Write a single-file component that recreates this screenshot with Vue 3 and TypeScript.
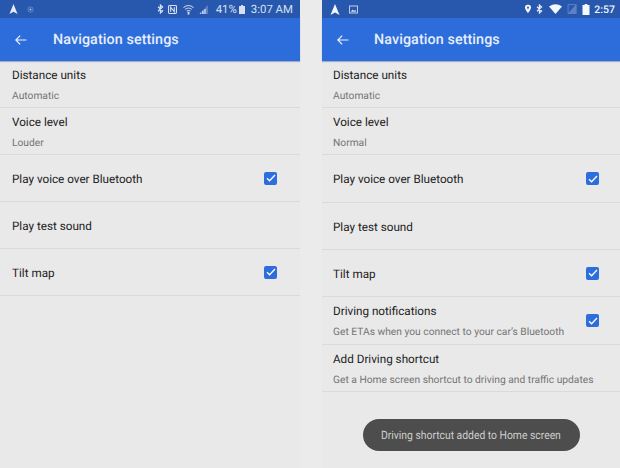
<script setup lang="ts">
interface Row {
  title: string;
  sub?: string;
  checked?: boolean;
  h: number;
}

const leftRows: Row[] = [
  { title: 'Distance units', sub: 'Automatic', h: 47 },
  { title: 'Voice level', sub: 'Louder', h: 47 },
  { title: 'Play voice over Bluetooth', checked: true, h: 47 },
  { title: 'Play test sound', h: 47 },
  { title: 'Tilt map', checked: true, h: 47 },
];

const rightRows: Row[] = [
  { title: 'Distance units', sub: 'Automatic', h: 47 },
  { title: 'Voice level', sub: 'Normal', h: 47 },
  { title: 'Play voice over Bluetooth', checked: true, h: 48 },
  { title: 'Play test sound', h: 47 },
  { title: 'Tilt map', checked: true, h: 47 },
  { title: 'Driving notifications', sub: 'Get ETAs when you connect to your car’s Bluetooth', checked: true, h: 48 },
  { title: 'Add Driving shortcut', sub: 'Get a Home screen shortcut to driving and traffic updates', h: 47 },
];
</script>

<template>
  <div class="shot">
    <!-- left phone -->
    <section class="phone left">
      <div class="status">
        <svg width="9" height="10" viewBox="0 0 10 11"><path d="M5 0 9.5 11 5 8.6.5 11z" fill="#e6ecf8" /></svg>
        <svg class="dot" width="7" height="7" viewBox="0 0 8 8"><circle cx="4" cy="4" r="3" fill="none" stroke="#6f8fcf" /><circle cx="4" cy="4" r="1.2" fill="#a9bde6" /></svg>
        <span class="grow"></span>
        <svg width="7" height="10" viewBox="0 0 7 10"><path d="M1 2.8 5.6 7 3.4 9V1L5.6 3 1 7.2" fill="none" stroke="#d7e0f3" stroke-width="1.2" /></svg>
        <svg class="ml4" width="9" height="9" viewBox="0 0 10 10"><rect x=".6" y=".6" width="8.8" height="8.8" rx="1" fill="none" stroke="#d7e0f3" stroke-width="1.2" /><path d="M3 7.5V2.5L7 7.5V2.5" fill="none" stroke="#d7e0f3" stroke-width="1.2" /></svg>
        <svg class="ml6" width="11" height="11" viewBox="0 0 12 11"><path d="M.5 3.5Q6-1 11.5 3.5M2.3 5.4Q6 2.4 9.7 5.4M4 7.2Q6 5.8 8 7.2" fill="none" stroke="#c3d0ec" stroke-width="1.1" /><path d="M5 8h2v3H5z" fill="#d7e0f3" /></svg>
        <svg class="ml5" width="10" height="9" viewBox="0 0 11 10"><path d="M0 10 10 0v10z" fill="#5f80c4" /><path d="M1 10h1V8.5H1zM3.5 10H5V6.5H3.5zM6 10h1.3V4.5H6z" fill="#d7e0f3" /></svg>
        <span class="st-text pct">41%</span>
        <svg class="ml2" width="6" height="9" viewBox="0 0 6 9"><path d="M2 0h2v1h2v8H0V1h2z" fill="#d7e0f3" /></svg>
        <span class="st-text time">3:07 AM</span>
      </div>
      <header class="bar">
        <svg width="12" height="10" viewBox="0 0 14 12"><path d="M13.5 6H1M6 .8.8 6 6 11.2" fill="none" stroke="#f2f5fc" stroke-width="1.4" /></svg>
        <span class="bar-title">Navigation settings</span>
      </header>
      <ul class="list">
        <li v-for="row in leftRows" :key="row.title" class="row" :style="{ height: row.h + 'px' }">
          <div class="texts">
            <div class="title">{{ row.title }}</div>
            <div v-if="row.sub" class="sub">{{ row.sub }}</div>
          </div>
          <span v-if="row.checked" class="box">
            <svg width="10" height="8" viewBox="0 0 10 8"><path d="M1 4.2 3.6 6.8 9 1" fill="none" stroke="#fff" stroke-width="1.3" /></svg>
          </span>
        </li>
      </ul>
    </section>

    <!-- right phone -->
    <section class="phone right">
      <div class="status">
        <svg width="10" height="11" viewBox="0 0 10 11"><path d="M5 0 9.5 11 5 8.6.5 11z" fill="#f4f7fc" /></svg>
        <svg class="dot" width="9" height="9" viewBox="0 0 10 9"><rect x=".6" y=".6" width="8.8" height="7.8" fill="none" stroke="#c3d0ec" stroke-width="1.1" /><path d="M2 7 4 4.5 5.5 6 7 5 8 7z" fill="#d7e0f3" /></svg>
        <span class="grow"></span>
        <svg width="6" height="10" viewBox="0 0 7 10"><path d="M3.5 0A3.3 3.3 0 0 1 7 3.3C7 5.5 3.5 10 3.5 10S0 5.5 0 3.3A3.3 3.3 0 0 1 3.5 0z" fill="#f4f7fc" /><circle cx="3.5" cy="3.4" r="1.2" fill="#2758ad" /></svg>
        <svg class="ml5" width="7" height="10" viewBox="0 0 7 10"><path d="M1 2.8 5.6 7 3.4 9V1L5.6 3 1 7.2" fill="none" stroke="#e6ecf8" stroke-width="1.2" /></svg>
        <svg class="ml6" width="13" height="10" viewBox="0 0 13 10"><path d="M0 2.4Q6.5-2 13 2.4L6.5 10z" fill="#f4f7fc" /></svg>
        <svg class="ml5" width="10" height="10" viewBox="0 0 9 10"><path d="M0 10 9 0v10z" fill="#5f80c4" /><path d="M.6 .6H8.4V9.4H.6z" fill="none" stroke="#5f80c4" stroke-width="1" /></svg>
        <svg class="ml5" width="8" height="11" viewBox="0 0 7 11"><path d="M2.2 0h2.6v1H7v10H0V1h2.2z" fill="#f4f7fc" /></svg>
        <span class="st-text clock">2:57</span>
      </div>
      <header class="bar">
        <svg width="12" height="10" viewBox="0 0 14 12"><path d="M13.5 6H1M6 .8.8 6 6 11.2" fill="none" stroke="#f2f5fc" stroke-width="1.4" /></svg>
        <span class="bar-title">Navigation settings</span>
      </header>
      <ul class="list">
        <li v-for="row in rightRows" :key="row.title" class="row" :style="{ height: row.h + 'px' }">
          <div class="texts">
            <div class="title">{{ row.title }}</div>
            <div v-if="row.sub" class="sub">{{ row.sub }}</div>
          </div>
          <span v-if="row.checked" class="box">
            <svg width="10" height="8" viewBox="0 0 10 8"><path d="M1 4.2 3.6 6.8 9 1" fill="none" stroke="#fff" stroke-width="1.3" /></svg>
          </span>
        </li>
      </ul>
      <div class="toast-wrap">
        <div class="toast"><span class="toast-text">Driving shortcut added to Home screen</span></div>
      </div>
    </section>
  </div>
</template>

<style>
html,
body {
  margin: 0;
  background: #e9e9e9;
}
</style>

<style scoped>
.shot {
  width: 620px;
  height: 468px;
  display: flex;
  justify-content: space-between;
  background: #ebebeb;
  overflow: hidden;
  font-family: Roboto, "Liberation Sans", sans-serif;
  text-rendering: geometricPrecision;
}

.phone {
  height: 468px;
  background: #e9e9e9;
  display: flex;
  flex-direction: column;
}

.left {
  width: 300px;
}

.right {
  width: 298px;
}

.status {
  height: 18px;
  background: #2758ad;
  display: flex;
  align-items: center;
  padding: 0 7px 0 9px;
  flex: none;
}

.right .status {
  padding: 0 5px 0 8px;
}

.grow {
  flex: 1;
}

.dot {
  margin-left: 9px;
}

.ml2 {
  margin-left: 2px;
}

.ml4 {
  margin-left: 4px;
}

.ml5 {
  margin-left: 5px;
}

.ml6 {
  margin-left: 6px;
}

.st-text {
  color: #d7e0f3;
  font-size: 11.4px;
}

.pct {
  margin-left: 7px;
}

.time {
  margin-left: 6px;
}

.clock {
  color: #f0f4fb;
  font-size: 10.5px;
  font-weight: 500;
  margin-left: 4px;
}

.bar {
  height: 43px;
  background: #2c6ddb;
  display: flex;
  align-items: center;
  padding-left: 15px;
  box-shadow: 0 1px 1px rgba(40, 70, 130, 0.35);
  flex: none;
}

.bar-title {
  margin-left: 26px;
  padding-top: 1px;
  color: #e8effb;
  font-size: 14.3px;
  font-weight: 500;
  letter-spacing: 0.1px;
}

.right .bar-title {
  margin-left: 25px;
  padding-top: 0;
}

.list {
  list-style: none;
  margin: 0;
  padding: 0;
}

.row {
  box-sizing: border-box;
  display: flex;
  align-items: center;
  justify-content: space-between;
  padding: 0 23px 0 12px;
  border-bottom: 1px solid #dadada;
}

.texts {
  padding-top: 1px;
  white-space: nowrap;
}

.title {
  color: #222;
  font-size: 11.7px;
  line-height: 16px;
}

.sub {
  color: #757575;
  font-size: 10.25px;
  line-height: 14px;
  margin-top: 6px;
}

.box {
  width: 13px;
  height: 13px;
  border-radius: 2px;
  background: #2e6ddc;
  display: flex;
  align-items: center;
  justify-content: center;
  flex: none;
}

.right .row {
  padding: 0 21px 0 11px;
}

.toast-wrap {
  display: flex;
  justify-content: center;
  margin-top: 27px;
}

.toast {
  width: 217px;
  height: 32px;
  border-radius: 16px;
  background: #4d4d4d;
  color: #cfcfcf;
  font-size: 11.5px;
  display: flex;
  align-items: center;
  justify-content: center;
  white-space: nowrap;
}

.toast-text {
  transform: scaleX(0.9);
}
</style>
